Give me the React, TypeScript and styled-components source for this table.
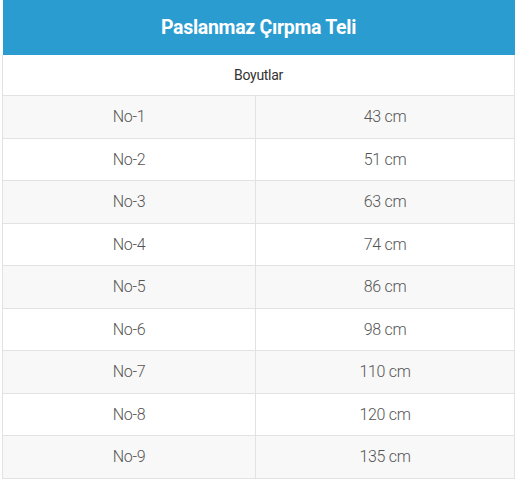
import React from "react";
import styled, { createGlobalStyle } from "styled-components";

const Global = createGlobalStyle`
  html, body { margin: 0; padding: 0; background: #ffffff; }
  body { font-family: Roboto, "Liberation Sans", sans-serif; }
`;

const Wrap = styled.div`
  width: 512px;
  margin-left: 2px;
`;

const Table = styled.table`
  width: 100%;
  border-collapse: collapse;
  table-layout: fixed;
`;

const Col = styled.col<{ $w: number }>`
  width: ${(p) => p.$w}px;
`;

const Title = styled.th`
  height: 55px;
  padding: 0;
  background: #2b9cd0;
  color: #ffffff;
  font-family: Roboto, "Liberation Sans", sans-serif;
  font-weight: 700;
  font-size: 19.5px;
  letter-spacing: -0.3px;
  text-align: center;
  vertical-align: middle;
  border: none;
`;

const Sub = styled.td`
  height: 40px;
  padding: 0;
  background: #ffffff;
  color: #333333;
  font-family: Roboto, "Liberation Sans", sans-serif;
  font-size: 14px;
  font-weight: 400;
  letter-spacing: -0.3px;
  text-align: center;
  border: 1px solid #e2e2e2;
  border-top: none;
`;

const Row = styled.tr<{ $alt: boolean }>`
  background: ${(p) => (p.$alt ? "#f8f8f8" : "#ffffff")};
`;

const Cell = styled.td`
  height: 41.5px;
  padding: 0;
  color: #555555;
  font-family: Roboto, "Liberation Sans", sans-serif;
  font-weight: 300;
  font-size: 16px;
  letter-spacing: -0.3px;
  text-align: center;
  border: 1px solid #e2e2e2;
`;

const rows = [
  ["No-1", "43 cm"],
  ["No-2", "51 cm"],
  ["No-3", "63 cm"],
  ["No-4", "74 cm"],
  ["No-5", "86 cm"],
  ["No-6", "98 cm"],
  ["No-7", "110 cm"],
  ["No-8", "120 cm"],
  ["No-9", "135 cm"],
];

export default function App() {
  return (
    <>
      <Global />
      <Wrap>
        <Table>
          <colgroup>
            <Col $w={253} />
            <Col $w={259} />
          </colgroup>
          <thead>
            <tr>
              <Title colSpan={2}>Paslanmaz Çırpma Teli</Title>
            </tr>
          </thead>
          <tbody>
            <tr>
              <Sub colSpan={2}>Boyutlar</Sub>
            </tr>
            {rows.map(([a, b], i) => (
              <Row key={a} $alt={i % 2 === 0}>
                <Cell>{a}</Cell>
                <Cell>{b}</Cell>
              </Row>
            ))}
          </tbody>
        </Table>
      </Wrap>
    </>
  );
}
